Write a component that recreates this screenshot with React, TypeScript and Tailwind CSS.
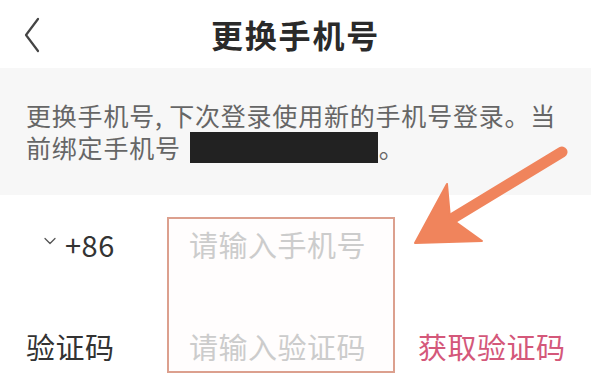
import { ChevronDown } from "lucide-react";

const font = { fontFamily: '"Noto Sans CJK SC", "Noto Sans", sans-serif' };

function BackIcon() {
  return (
    <svg width="18" height="36" viewBox="0 0 18 36" fill="none">
      <path d="M15 2 L3 18 L15 34" stroke="#444" strokeWidth="2.2" strokeLinecap="round" strokeLinejoin="round" />
    </svg>
  );
}

function Arrow() {
  return (
    <svg className="pointer-events-none absolute left-0 top-0" width="591" height="378" viewBox="0 0 591 378">
      <path d="M562 152 L440 226" stroke="#f0845c" strokeWidth="11" strokeLinecap="round" />
      <path d="M415 243 L447 184 L450 218 L482 241 Z" fill="#f0845c" stroke="#f0845c" strokeWidth="2" strokeLinejoin="round" />
    </svg>
  );
}

export default function App() {
  return (
    <div className="relative h-[378px] w-[591px] overflow-hidden bg-white" style={font}>
      <div className="grid h-[68px] grid-cols-[1fr_auto_1fr] items-center">
        <div className="pl-[23px] pt-[2px]">
          <BackIcon />
        </div>
        <h1 className="text-[32px] font-bold leading-none tracking-[1.8px] text-[#2a2a2a]">更换手机号</h1>
        <div />
      </div>

      <div className="h-[127px] bg-[#f7f7f7] px-[26px] pt-[31px] text-[25px] leading-[32px] tracking-[0.8px] text-[#666]">
        <p>更换手机号, 下次登录使用新的手机号登录。当</p>
        <p className="flex h-[32px] items-center">
          前绑定手机号
          <span className="ml-[9px] inline-block h-[31px] w-[188px] bg-[#222]" />
          <span className="ml-[1px]">。</span>
        </p>
      </div>

      <div className="mt-[22px] flex text-[29px] leading-none tracking-[0.5px]">
        <div className="flex w-[167px] flex-col justify-between py-[2px]">
          <div className="flex h-[50px] items-center pl-[40px] text-[#333]">
            <ChevronDown size={20} strokeWidth={1.5} className="mr-[5px] mt-[-6px] text-[#555]" />
            <span>+86</span>
          </div>
          <div className="flex h-[50px] items-center pl-[26px] text-[#333]">验证码</div>
        </div>

        <div className="flex h-[156px] w-[228px] flex-col justify-between border-2 border-[#dca08e] bg-[#fffdfd] pl-[20px]">
          <div className="flex h-[50px] items-center text-[#cccccc]">请输入手机号</div>
          <div className="flex h-[50px] items-center text-[#cccccc]">请输入验证码</div>
        </div>

        <div className="flex flex-col justify-between py-[2px] pl-[23px]">
          <div className="h-[50px]" />
          <div className="flex h-[50px] items-center text-[#d4587a]">获取验证码</div>
        </div>
      </div>

      <Arrow />
    </div>
  );
}
